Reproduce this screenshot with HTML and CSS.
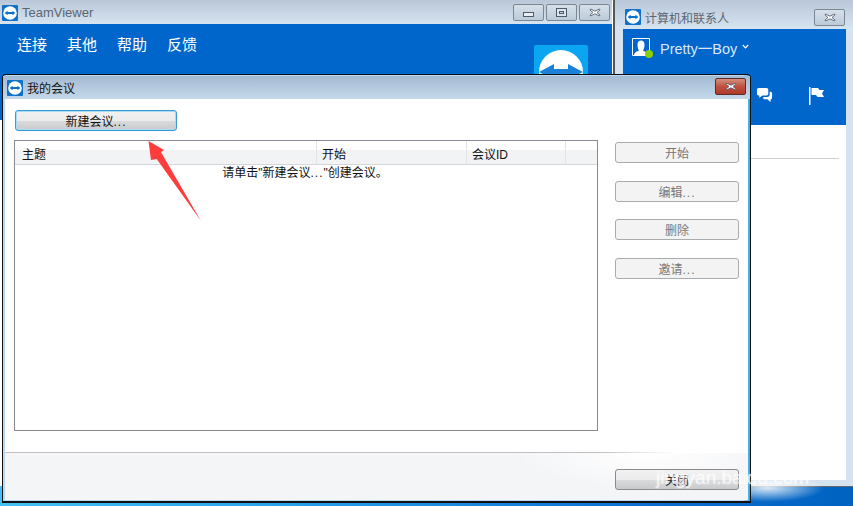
FILE: index.html
```html
<!DOCTYPE html>
<html>
<head>
    <title>TeamViewer - 我的会议</title>
    <link rel="stylesheet" href="styles.css">
</head>
<body>
    <svg class="defs" width="0" height="0">
        <symbol id="tvLogo" viewBox="0 0 16 16">
            <rect width="16" height="16" rx="1" fill="#0e72cc"/>
            <circle cx="8" cy="8" r="6.8" fill="#fff"/>
            <path d="M2.600 8 5.600 5.700V7.100H10.400V5.700L13.400 8 10.400 10.300V8.900H5.600V10.300Z" fill="#0e72cc"/>
        </symbol>
        <symbol id="closeX" viewBox="0 0 12 9">
            <path d="M1.500 1 6 3.200 10.500 1 11 2 8 4.500 11 7 10.500 8 6 5.800 1.500 8 1 7 4 4.500 1 2Z" fill="#fff" stroke="#4a5564" stroke-width=".8"/>
        </symbol>
    </svg>

    <div class="window mainWindow">
        <div class="titlebar mainTitle">
            <svg class="appIcon"><use href="#tvLogo"/></svg>
            <span class="titleText greyTitle appName">TeamViewer</span>
            <div class="winButtons">
                <div class="winBtn"><span class="minGlyph"></span></div>
                <div class="winBtn"><span class="maxGlyph"></span></div>
                <div class="winBtn"><svg class="xGlyph"><use href="#closeX"/></svg></div>
            </div>
        </div>
        <div class="blueArea">
            <div class="menu">
                <span>连接</span>
                <span>其他</span>
                <span>帮助</span>
                <span>反馈</span>
            </div>
            <div class="bigLogo">
                <svg width="54" height="54" viewBox="0 0 54 54">
                    <rect width="54" height="54" rx="2" fill="#0aa6f2"/>
                    <circle cx="27" cy="27" r="22" fill="#fff"/>
                    <path d="M5 27 20 19V24H34V19L49 27 34 35V30H20V35Z" fill="#1a80d8"/>
                </svg>
            </div>
        </div>
    </div>

    <div class="window sideWindow">
        <div class="titlebar sideTitle">
            <svg class="appIcon"><use href="#tvLogo"/></svg>
            <span class="titleText greyTitle">计算机和联系人</span>
            <div class="winButtons">
                <div class="winBtn"><svg class="xGlyph"><use href="#closeX"/></svg></div>
            </div>
        </div>
        <div class="sideBody">
            <div class="sideBlue">
                <div class="profile">
                    <div class="avatar">
                        <svg width="18" height="18" viewBox="0 0 18 18">
                            <path d="M.5.500H17.500V17.500H.5Z" fill="none" stroke="#fff"/>
                            <path d="M2 17C2.500 14 5 13.500 7 12.500 6 11 5.500 9 5.500 6.500 5.500 4 7 2.500 9 2.500 11 2.500 12.500 4 12.500 6.500 12.500 9 12 11 11 12.500 12.500 13.500 15 14 16 17Z" fill="#fff"/>
                        </svg>
                        <span class="statusDot"></span>
                    </div>
                    <span class="profileName">Pretty一Boy</span>
                    <svg class="chevron" width="7" height="5" viewBox="0 0 7 5"><path d="M.8 1 3.500 3.800 6.200 1" fill="none" stroke="#fff" stroke-width="1.200"/></svg>
                </div>
                <div class="sideIcons">
                    <svg width="17" height="17" viewBox="0 0 18 18">
                        <path d="M3 1H11C12.500 1 13 2 13 3V7C13 8.500 12.500 9 11 9H7L3.500 11.500V9H3C1.500 9 1 8.500 1 7V3C1 2 1.500 1 3 1Z" fill="#fff"/>
                        <path d="M14.500 5H15.500C16.500 5 17 6 17 7V11C17 12 16.500 13 15.500 13V16L12 13H8L7.500 10.500H12C13.500 10.500 14.500 9.500 14.500 8Z" fill="#fff"/>
                    </svg>
                    <svg width="17" height="18" viewBox="0 0 17 18">
                        <path d="M1 0H2.500V18H1ZM3.500 1H10L11.500 3H16L14 6.500 16 10H9.500L8 8H3.500Z" fill="#fff"/>
                    </svg>
                </div>
            </div>
            <div class="sideWhite">
                <div class="sideRule"></div>
            </div>
        </div>
    </div>

    <div class="desktopGlow"></div>

    <div class="dialog">
        <div class="titlebar dialogTitle">
            <svg class="appIcon"><use href="#tvLogo"/></svg>
            <span class="titleText">我的会议</span>
            <div class="redClose"><svg class="xGlyph"><use href="#closeX"/></svg></div>
        </div>
        <div class="dialogBody">
            <div class="content">
                <button class="btn btnFocus newBtn">新建会议<span class="dots">...</span></button>
                <div class="columns">
                    <div class="table">
                        <div class="tableHead">
                            <div class="th colSubject">主题</div>
                            <div class="th colStart">开始</div>
                            <div class="th colId">会议ID</div>
                            <div class="th colRest"></div>
                        </div>
                        <div class="emptyMsg">请单击"新建会议<span class="dots">...</span>"创建会议。</div>
                    </div>
                    <div class="sideButtons">
                        <button class="btn btnOff">开始</button>
                        <button class="btn btnOff">编辑<span class="dots">...</span></button>
                        <button class="btn btnOff">删除</button>
                        <button class="btn btnOff">邀请<span class="dots">...</span></button>
                    </div>
                </div>
            </div>
            <div class="footer">
                <button class="btn closeBtn">关闭</button>
            </div>
        </div>
    </div>

    <svg class="arrow" width="60" height="90" viewBox="0 0 60 90">
        <path d="M.5 1 16 10 13 12.300 53 81 8.700 19 3 20Z" fill="#ff3c3c"/>
    </svg>

    <div class="watermark">jingyan.baidu.com</div>
</body>
</html>
```

FILE: styles.css
```css
* {
    box-sizing: border-box;
}

body {
    margin: 0;
    width: 853px;
    height: 506px;
    position: relative;
    overflow: hidden;
    font-family: "Liberation Sans", "Noto Sans CJK SC", sans-serif;
    font-size: 12px;
    color: #111;
    background: linear-gradient(to right, #45c0f4 0%, #2ba4ec 30%, #0c6fd0 75%, #0062c0 100%);
}

.defs {
    position: absolute;
}

.window {
    position: absolute;
    top: 0;
    background-color: #d5e2f0;
}

.mainWindow {
    left: 0;
    width: 615px;
    height: 486px;
    padding-right: 1px;
    border-right: 2px solid #555;
    background-color: #fff;
}

.sideWindow {
    left: 615px;
    width: 238px;
    height: 487px;
    border-bottom: 1px solid #666;
}

.titlebar {
    display: flex;
    align-items: center;
    height: 24px;
    padding-left: 2px;
    background: linear-gradient(to bottom, #b9c7d8, #d6e3f1);
}

.mainTitle {
    padding-top: 1px;
}

.appIcon {
    width: 16px;
    height: 16px;
    flex: none;
}

.titleText {
    margin-left: 5px;
    font-size: 12px;
}

.appName {
    margin-left: 4px;
    font-size: 13px;
}

.greyTitle {
    color: #5c6670;
}

.winButtons {
    display: flex;
    gap: 2px;
    margin-left: auto;
    margin-right: 2px;
    align-self: flex-start;
    margin-top: 3px;
}

.winBtn {
    width: 31px;
    height: 17px;
    display: flex;
    align-items: center;
    justify-content: center;
    border: 1px solid #7c8794;
    border-radius: 2px;
    background: linear-gradient(to bottom, #d6e0ea, #bccad9);
}

.minGlyph {
    width: 11px;
    height: 5px;
    margin-top: 3px;
    border: 1px solid #4f5a68;
    background-color: #e8edf3;
}

.maxGlyph {
    width: 11px;
    height: 9px;
    border: 1px solid #4f5a68;
    box-shadow: inset 0 0 0 2px #dbe3ec, inset 0 0 0 3px #4f5a68;
}

.xGlyph {
    width: 12px;
    height: 9px;
}

.blueArea {
    height: 96px;
    padding-left: 17px;
    position: relative;
    background-color: #0066cc;
}

.menu {
    display: flex;
    gap: 20px;
    padding-top: 11px;
    color: #fff;
    font-size: 15px;
    line-height: 20px;
}

.bigLogo {
    position: absolute;
    top: 21px;
    left: 534px;
}

.sideTitle {
    height: 29px;
    padding-left: 10px;
    padding-top: 5px;
}

.sideTitle .titleText {
    margin-left: 4px;
}

.sideTitle .winButtons {
    margin-top: 4px;
    margin-right: 8px;
}

.sideBody {
    padding: 0 7px 0 8px;
}

.sideBlue {
    height: 96px;
    padding: 8px 0 0 9px;
    background-color: #0066cc;
    position: relative;
}

.profile {
    display: flex;
    align-items: center;
    color: #dbe8f6;
    font-size: 14.5px;
    height: 20px;
}

.avatar {
    width: 18px;
    height: 18px;
    position: relative;
}

.statusDot {
    position: absolute;
    left: 13px;
    top: 12px;
    width: 8px;
    height: 8px;
    border-radius: 50%;
    background-color: #88d000;
}

.profileName {
    margin-left: 10px;
}

.chevron {
    margin-left: 5px;
    margin-top: -2px;
}

.sideIcons {
    position: absolute;
    left: 133px;
    top: 58px;
    display: flex;
    gap: 35px;
}

.sideWhite {
    height: 355px;
    padding-top: 33px;
    background-color: #fff;
}

.sideRule {
    height: 1px;
    margin-right: 7px;
    background-color: #d0d0d0;
}

.desktopGlow {
    position: absolute;
    left: 710px;
    top: 474px;
    width: 115px;
    height: 28px;
    background: radial-gradient(ellipse at center, rgba(255, 255, 255, 0.85), rgba(255, 255, 255, 0) 70%);
}

.dialog {
    position: absolute;
    left: 2px;
    top: 74px;
    width: 749px;
    height: 429px;
    padding: 1px 2px 2px 2px;
    border: 1px solid #111;
    border-bottom-width: 2px;
    border-radius: 4px 4px 0 0;
    background: linear-gradient(to right, #b8d8f4, #b8d8f4 99%, #30a8dc);
}

.dialogTitle {
    height: 23px;
    padding-left: 2px;
    margin: 0 -2px;
    background: linear-gradient(to bottom, #a4bad2, #c4d8ea);
}

.dialogTitle .appIcon {
    margin-left: 2px;
}

.dialogTitle .titleText {
    margin-left: 4px;
}

.redClose {
    width: 31px;
    height: 17px;
    margin-left: auto;
    margin-right: 4px;
    margin-top: -2px;
    display: flex;
    align-items: center;
    justify-content: center;
    border: 1px solid #5e2a2a;
    border-radius: 2px;
    background: linear-gradient(to bottom, #d4907e, #c25040 50%, #b03828);
}

.dialogBody {
    height: 401px;
    display: flex;
    flex-direction: column;
    background-color: #fff;
}

.content {
    flex: 1;
    padding: 11px 10px 0 10px;
}

.btn {
    display: block;
    padding: 0;
    font-family: inherit;
    font-size: 12px;
    border-radius: 3px;
    border: 1px solid #8a8a8a;
    background: linear-gradient(to bottom, #f2f2f2, #ebebeb 50%, #d8dadc 55%, #c8cacc);
    color: #111;
}

.dots {
    letter-spacing: 1px;
}

.btnFocus {
    border-color: #3c98d0;
    box-shadow: inset 0 0 0 1px #a8dcf4;
}

.newBtn {
    width: 162px;
    height: 21px;
}

.columns {
    display: flex;
    margin-top: 9px;
    margin-left: -1px;
}

.table {
    flex: none;
    width: 584px;
    height: 291px;
    border: 1px solid #8a8a96;
    background-color: #fff;
}

.tableHead {
    display: flex;
    height: 24px;
    border-bottom: 1px solid #d4d6d8;
    background: linear-gradient(to bottom, #ffffff 40%, #f2f3f5 40%);
}

.th {
    padding: 5px 0 0 5px;
    line-height: 18px;
    border-right: 1px solid #e2e4e7;
}

.colSubject {
    width: 302px;
    padding-left: 7px;
}

.colStart {
    width: 150px;
}

.colId {
    width: 99px;
}

.colRest {
    flex: 1;
    border-right: none;
}

.emptyMsg {
    padding-top: 1px;
    padding-right: 2px;
    line-height: 14px;
    text-align: center;
    font-size: 12px;
}

.sideButtons {
    flex: none;
    display: flex;
    flex-direction: column;
    gap: 17.7px;
    margin-left: 17px;
    margin-top: 2px;
}

.btnOff {
    width: 124px;
    height: 21px;
    border-color: #a8acae;
    background: #f3f3f3;
    color: #777;
}

.footer {
    height: 48px;
    padding: 16px 0 0 610px;
    border-top: 1px solid;
    border-image: linear-gradient(to right, #c0c0c4 80%, #fff 90%) 1;
    background: radial-gradient(ellipse 130px 36px at 640px 0, #fff, rgba(255, 255, 255, 0)), #f4f5f7;
}

.closeBtn {
    width: 124px;
    height: 21px;
}

.arrow {
    position: absolute;
    left: 148px;
    top: 140px;
}

.watermark {
    position: absolute;
    left: 656px;
    top: 467px;
    font-size: 19px;
    line-height: 22px;
    color: rgba(255, 255, 255, 0.7);
    text-shadow: 0 0 3px rgba(255, 255, 255, 0.5);
}
```
